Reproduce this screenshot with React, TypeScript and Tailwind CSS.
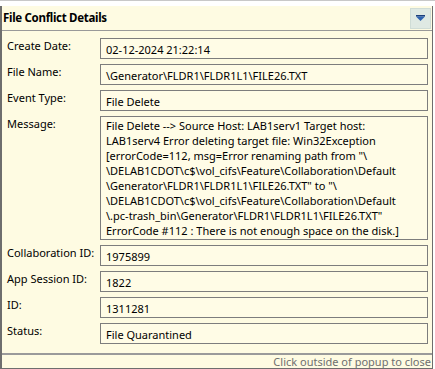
import React from 'react';

const font = { fontFamily: '"Noto Sans", "Open Sans", sans-serif' };

const messageLines = [
  'File Delete --> Source Host: LAB1serv1 Target host:',
  'LAB1serv4 Error deleting target file: Win32Exception',
  '[errorCode=112, msg=Error renaming path from "\\',
  '\\DELAB1CDOT\\c$\\vol_cifs\\Feature\\Collaboration\\Default',
  '\\Generator\\FLDR1\\FLDR1L1\\FILE26.TXT" to "\\',
  '\\DELAB1CDOT\\c$\\vol_cifs\\Feature\\Collaboration\\Default',
  '\\.pc-trash_bin\\Generator\\FLDR1\\FLDR1L1\\FILE26.TXT"',
  'ErrorCode #112 : There is not enough space on the disk.]',
];

const Row = ({ label, children, tall }: { label: string; children: React.ReactNode; tall?: boolean }) => (
  <div className="flex">
    <div className="w-[93px] shrink-0 text-[11px] leading-[15px] text-black whitespace-nowrap">{label}</div>
    <div
      className={`w-[328px] border border-[#7d7d7d] bg-[#fffce6] px-[5px] text-[11px] text-black ${
        tall ? 'h-[124px] pt-[1px] leading-[15px]' : 'h-[21px] leading-[19px] pt-[1px]'
      }`}
    >
      {children}
    </div>
  </div>
);

const App = () => {
  return (
    <div className="w-[435px] h-[369px] overflow-hidden bg-white flex flex-col" style={font}>
      {/* strip of window behind */}
      <div className="h-[6px] shrink-0 bg-white border-t border-[#c8c8c8]" />

      <div className="flex-1 flex flex-col w-[433px] border-l-2 border-r border-b border-[#6e6e6e] bg-[#fefbe2]">
        {/* header */}
        <div className="h-[25px] shrink-0 flex items-center justify-between pl-[1px] pr-[1px] border-b border-[#999999]">
          <span className="text-[11.5px] font-bold text-black tracking-[-0.3px]">File Conflict Details</span>
          <button className="w-[21px] h-[21px] flex items-center justify-center bg-[#dfe9e3] border border-[#cfdcd6]">
            <svg width="9" height="6" viewBox="0 0 9 6">
              <rect x="0" y="0" width="9" height="1.5" fill="#1d3f7a" />
              <path d="M0 1.5 H9 L4.5 6 Z" fill="#2f63b0" />
            </svg>
          </button>
        </div>

        {/* fields */}
        <div className="flex-1 flex flex-col gap-[5px] pl-[5px] pt-[7px]">
          <Row label="Create Date:">02-12-2024 21:22:14</Row>
          <Row label="File Name:">\Generator\FLDR1\FLDR1L1\FILE26.TXT</Row>
          <Row label="Event Type:">File Delete</Row>
          <Row label="Message:" tall>
            {messageLines.map((l, i) => (
              <div key={i} className="whitespace-nowrap">
                {l}
              </div>
            ))}
          </Row>
          <Row label="Collaboration ID:">1975899</Row>
          <Row label="App Session ID:">1822</Row>
          <Row label="ID:">1311281</Row>
          <Row label="Status:">File Quarantined</Row>
        </div>

        {/* footer */}
        <div className="h-[15px] shrink-0 border-t-2 border-[#9a9a9a] flex items-center justify-end overflow-hidden pr-[1px]">
          <span className="text-[11px] leading-[13px] text-[#6f6f6f] whitespace-nowrap">Click outside of popup to close</span>
        </div>
      </div>
    </div>
  );
};

export default App;
